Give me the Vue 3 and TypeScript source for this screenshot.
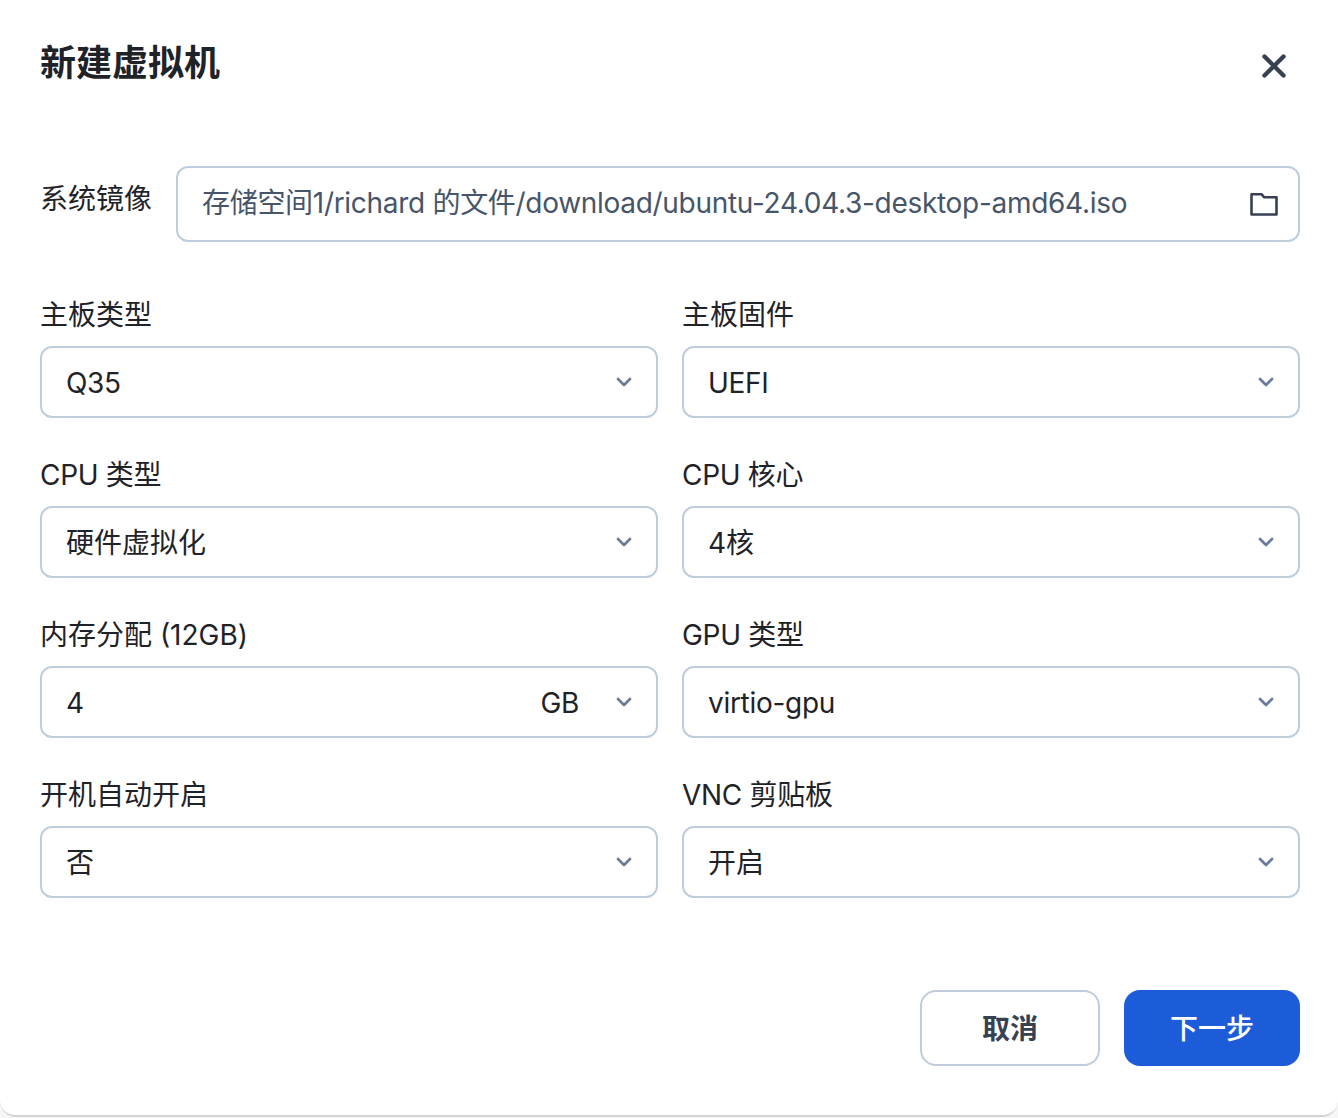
<script setup lang="ts">
interface Field { label: string; value: string; unit?: string }
const fields: Field[] = [
  { label: '主板类型', value: 'Q35' },
  { label: '主板固件', value: 'UEFI' },
  { label: 'CPU 类型', value: '硬件虚拟化' },
  { label: 'CPU 核心', value: '4核' },
  { label: '内存分配 (12GB)', value: '4', unit: 'GB' },
  { label: 'GPU 类型', value: 'virtio-gpu' },
  { label: '开机自动开启', value: '否' },
  { label: 'VNC 剪贴板', value: '开启' },
]
const startsLatin = (text: string): boolean => /^[A-Za-z0-9]/.test(text)
const hasCjk = (text: string): boolean => /[^\x00-\x7f]/.test(text)
</script>

<template>
  <div class="modal">
    <header class="head">
      <h1 class="title">新建虚拟机</h1>
      <svg class="close" width="24" height="24" viewBox="0 0 24 24" fill="none" stroke="#374151" stroke-width="4.4" stroke-linecap="round">
        <path d="M2.5 2.5 21.5 21.5M21.5 2.5 2.5 21.5" />
      </svg>
    </header>

    <div class="image-row">
      <label class="image-label">系统镜像</label>
      <div class="image-input">
        <span class="image-path">存储空间1/richard 的文件/download/ubuntu-24.04.3-desktop-amd64.iso</span>
        <svg class="folder" width="28" height="24" viewBox="0 0 28 24" fill="none" stroke="#374151" stroke-width="2.6" stroke-linejoin="round">
          <path d="M1.5 2.2H11.5L14 5.2H26.5V22.5H1.5Z" />
        </svg>
      </div>
    </div>

    <div class="grid">
      <div v-for="f in fields" :key="f.label" class="field">
        <label class="label" :class="{ latin: startsLatin(f.label) }">{{ f.label }}</label>
        <div class="select">
          <span class="value" :class="hasCjk(f.value) ? 'cjk' : 'latin'">{{ f.value }}</span>
          <span v-if="f.unit" class="unit latin">{{ f.unit }}</span>
          <svg class="chev" width="16" height="10" viewBox="0 0 16 10" fill="none" stroke="#6b7d99" stroke-width="2.8" stroke-linecap="round" stroke-linejoin="round">
            <path d="M2 2 8 8 14 2" />
          </svg>
        </div>
      </div>
    </div>

    <footer class="foot">
      <button class="btn ghost" type="button">取消</button>
      <button class="btn primary" type="button">下一步</button>
    </footer>
  </div>
</template>

<style>
html, body { margin: 0; background: #f6f6f6; }
</style>

<style scoped>
.modal {
  box-sizing: border-box;
  width: 1338px;
  height: 1117px;
  padding: 0 38px 0 40px;
  background: #fff;
  border-bottom: 2px solid #d4d4d4;
  border-radius: 0 0 16px 16px;
  font-family: Inter, "Noto Sans CJK SC", sans-serif;
  color: #1f2328;
  display: flex;
  flex-direction: column;
}
.latin { letter-spacing: -0.3px; }
.head {
  height: 166px;
  display: flex;
  justify-content: space-between;
  align-items: flex-start;
  flex: none;
}
.title {
  margin: 36px 0 0;
  font-size: 36px;
  line-height: 54px;
  font-weight: 700;
}
.close { margin: 54px 14px 0 0; }
.image-row {
  display: flex;
  gap: 24px;
  align-items: flex-start;
  flex: none;
}
.image-label {
  font-size: 28px;
  line-height: 66px;
  white-space: nowrap;
}
.image-input {
  box-sizing: border-box;
  flex: 1;
  height: 76px;
  border: 2px solid #bfccdd;
  border-radius: 12px;
  padding: 0 20px 0 24px;
  display: flex;
  align-items: center;
  justify-content: space-between;
}
.image-path {
  font-size: 28px;
  line-height: 66px;
  color: #475569;
  white-space: nowrap;
  letter-spacing: -0.3px;
  margin-bottom: 2px;
}
.grid {
  display: grid;
  grid-template-columns: 1fr 1fr;
  column-gap: 24px;
  row-gap: 32px;
  margin-top: 48px;
  flex: none;
}
.field { display: flex; flex-direction: column; }
.label {
  font-size: 28px;
  line-height: 50px;
  margin-bottom: 6px;
}
.select {
  box-sizing: border-box;
  height: 72px;
  border: 2px solid #bfccdd;
  border-radius: 12px;
  padding: 0 24px;
  display: flex;
  align-items: center;
}
.value { flex: 1; font-size: 28px; }
.value.latin { padding-top: 2px; }
.value.cjk { padding-bottom: 2px; }
.unit { font-size: 28px; margin-right: 37px; padding-top: 2px; }
.chev { flex: none; }
.foot {
  margin-top: 92px;
  display: flex;
  justify-content: flex-end;
  gap: 24px;
  flex: none;
}
.btn {
  box-sizing: border-box;
  height: 76px;
  border-radius: 16px;
  font-family: inherit;
  font-size: 28px;
  padding: 0 0 2px;
}
.ghost {
  width: 180px;
  background: #fff;
  border: 2px solid #bfccdd;
  color: #374151;
  font-weight: 600;
}
.primary {
  width: 176px;
  background: #1d5cd9;
  border: 0;
  color: #fff;
  font-weight: 500;
}
</style>
